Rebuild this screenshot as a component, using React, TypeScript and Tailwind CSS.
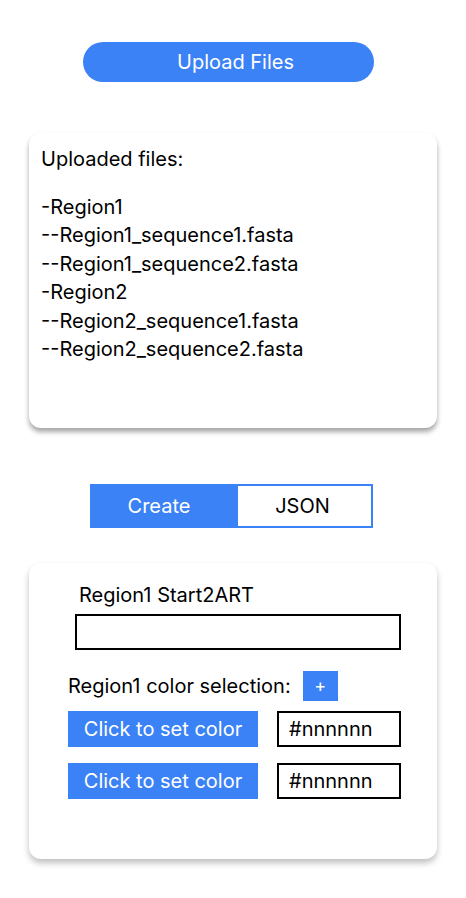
import * as React from "react";

const files = [
  "-Region1",
  "--Region1_sequence1.fasta",
  "--Region1_sequence2.fasta",
  "-Region2",
  "--Region2_sequence1.fasta",
  "--Region2_sequence2.fasta",
];

function ColorRow() {
  return (
    <div className="flex items-center gap-[19px]">
      <button className="w-[190px] h-[36px] bg-[#3b82f6] text-white text-[20px]">
        Click to set color
      </button>
      <div className="w-[124px] h-[36px] border-2 border-black flex items-center pl-[10px] text-[20px]">
        #nnnnnn
      </div>
    </div>
  );
}

export default function App() {
  return (
    <div
      className="w-[466px] min-h-[898px] bg-white text-black pt-[42px]"
      style={{ fontFamily: "Inter, 'Noto Sans', sans-serif" }}
    >
      <div className="flex justify-center">
        <button className="ml-[-9px] w-[291px] h-[40px] rounded-full bg-[#3b82f6] text-white text-[20px] pl-[14px]">
          Upload Files
        </button>
      </div>

      <div className="mx-[29px] mt-[51px] h-[295px] rounded-xl bg-white shadow-[0_4px_5px_rgba(0,0,0,0.35)] pl-[12px] pt-[12px]">
        <div className="text-[20px] leading-[28px]">Uploaded files:</div>
        <div className="mt-[20px] text-[20px] leading-[28.4px]">
          {files.map((f) => (
            <div key={f}>{f}</div>
          ))}
        </div>
      </div>

      <div className="mt-[56px] flex justify-center">
        <div className="flex w-[283px] h-[44px] border-2 border-[#3b82f6] ml-[-3px]">
          <div className="w-[146px] bg-[#3b82f6] text-white text-[20px] flex items-center justify-center pr-[12px]">
            Create
          </div>
          <div className="flex-1 bg-white text-[20px] flex items-center justify-center pr-[4px]">
            JSON
          </div>
        </div>
      </div>

      <div className="mx-[29px] mt-[35px] h-[296px] rounded-xl bg-white shadow-[0_4px_6px_rgba(0,0,0,0.25)] pt-[20px] pl-[39px]">
        <div className="pl-[11px] text-[20px] leading-[24px]">Region1 Start2ART</div>
        <div className="mt-[7px] ml-[7px] w-[326px] h-[36px] border-2 border-black" />
        <div className="mt-[21px] flex items-center gap-[12px] text-[20px]">
          <span>Region1 color selection:</span>
          <button className="w-[35px] h-[30px] bg-[#3b82f6] text-white text-[18px] leading-none">
            +
          </button>
        </div>
        <div className="mt-[10px] flex flex-col gap-[16px]">
          <ColorRow />
          <ColorRow />
        </div>
      </div>
    </div>
  );
}
